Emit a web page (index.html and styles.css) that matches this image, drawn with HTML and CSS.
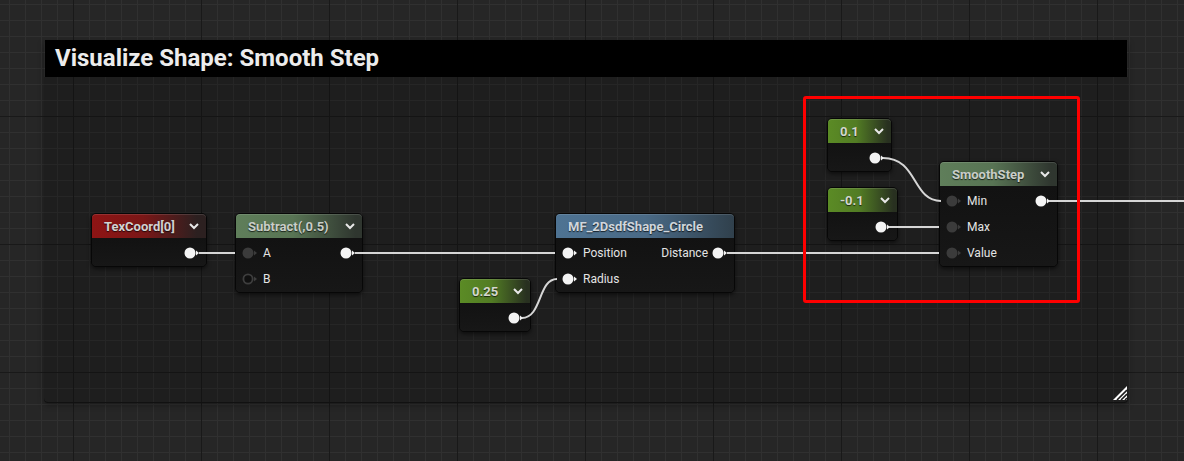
FILE: index.html
```html
<!DOCTYPE html>
<html lang="en">
<head>
    <meta charset="UTF-8">
    <title>Visualize Shape: Smooth Step</title>
    <link rel="stylesheet" href="styles.css">
</head>
<body>
    <div class="graph">
        <!-- Comment box -->
        <div class="comment">
            <div class="comment-title">Visualize Shape: Smooth Step</div>
            <div class="comment-body">
                <svg class="resize" viewBox="0 0 14 14">
                    <path d="M14 0 L14 14 L0 14 Z" fill="#fff"/>
                    <path d="M4 14 L14 4 M8 14 L14 8 M12 14 L14 12" stroke="#1c1c1c" stroke-width="1.6"/>
                </svg>
            </div>
        </div>

        <!-- Nodes -->
        <div class="node texcoord">
            <div class="node-head head-red"><span>TexCoord[0]</span><svg class="chev" viewBox="0 0 10 7"><polyline points="1,1 5,5 9,1"/></svg></div>
            <div class="node-body">
                <div class="row end">
                    <div class="out"><svg class="pin" viewBox="0 0 16 12"><circle cx="6" cy="6" r="5.5"/><path d="M12 3.5 L15 6 L12 8.5 Z"/></svg></div>
                </div>
            </div>
        </div>

        <div class="node subtract">
            <div class="node-head head-math"><span>Subtract(,0.5)</span><svg class="chev" viewBox="0 0 10 7"><polyline points="1,1 5,5 9,1"/></svg></div>
            <div class="node-body">
                <div class="row">
                    <div class="in"><svg class="pin dim" viewBox="0 0 16 12"><circle cx="6" cy="6" r="5.5"/><path d="M12 3.5 L15 6 L12 8.5 Z"/></svg><span>A</span></div>
                    <div class="out"><svg class="pin" viewBox="0 0 16 12"><circle cx="6" cy="6" r="5.5"/><path d="M12 3.5 L15 6 L12 8.5 Z"/></svg></div>
                </div>
                <div class="row">
                    <div class="in"><svg class="pin hollow" viewBox="0 0 16 12"><circle cx="6" cy="6" r="4.6"/><path d="M12 3.5 L15 6 L12 8.5 Z"/></svg><span>B</span></div>
                </div>
            </div>
        </div>

        <div class="node circle">
            <div class="node-head head-func"><span>MF_2DsdfShape_Circle</span></div>
            <div class="node-body">
                <div class="row">
                    <div class="in"><svg class="pin" viewBox="0 0 16 12"><circle cx="6" cy="6" r="5.5"/><path d="M12 3.5 L15 6 L12 8.5 Z"/></svg><span>Position</span></div>
                    <div class="out"><span>Distance</span><svg class="pin" viewBox="0 0 16 12"><circle cx="6" cy="6" r="5.5"/><path d="M12 3.5 L15 6 L12 8.5 Z"/></svg></div>
                </div>
                <div class="row">
                    <div class="in"><svg class="pin" viewBox="0 0 16 12"><circle cx="6" cy="6" r="5.5"/><path d="M12 3.5 L15 6 L12 8.5 Z"/></svg><span>Radius</span></div>
                </div>
            </div>
        </div>

        <div class="node const-radius">
            <div class="node-head head-const"><span>0.25</span><svg class="chev" viewBox="0 0 10 7"><polyline points="1,1 5,5 9,1"/></svg></div>
            <div class="node-body">
                <div class="row end">
                    <div class="out"><svg class="pin" viewBox="0 0 16 12"><circle cx="6" cy="6" r="5.5"/><path d="M12 3.5 L15 6 L12 8.5 Z"/></svg></div>
                </div>
            </div>
        </div>

        <div class="node const-min">
            <div class="node-head head-const"><span>0.1</span><svg class="chev" viewBox="0 0 10 7"><polyline points="1,1 5,5 9,1"/></svg></div>
            <div class="node-body">
                <div class="row end">
                    <div class="out"><svg class="pin" viewBox="0 0 16 12"><circle cx="6" cy="6" r="5.5"/><path d="M12 3.5 L15 6 L12 8.5 Z"/></svg></div>
                </div>
            </div>
        </div>

        <div class="node const-max">
            <div class="node-head head-const"><span>-0.1</span><svg class="chev" viewBox="0 0 10 7"><polyline points="1,1 5,5 9,1"/></svg></div>
            <div class="node-body">
                <div class="row end">
                    <div class="out"><svg class="pin" viewBox="0 0 16 12"><circle cx="6" cy="6" r="5.5"/><path d="M12 3.5 L15 6 L12 8.5 Z"/></svg></div>
                </div>
            </div>
        </div>

        <div class="node smoothstep">
            <div class="node-head head-math"><span>SmoothStep</span><svg class="chev" viewBox="0 0 10 7"><polyline points="1,1 5,5 9,1"/></svg></div>
            <div class="node-body">
                <div class="row">
                    <div class="in"><svg class="pin dim" viewBox="0 0 16 12"><circle cx="6" cy="6" r="5.5"/><path d="M12 3.5 L15 6 L12 8.5 Z"/></svg><span>Min</span></div>
                    <div class="out"><svg class="pin" viewBox="0 0 16 12"><circle cx="6" cy="6" r="5.5"/><path d="M12 3.5 L15 6 L12 8.5 Z"/></svg></div>
                </div>
                <div class="row">
                    <div class="in"><svg class="pin dim" viewBox="0 0 16 12"><circle cx="6" cy="6" r="5.5"/><path d="M12 3.5 L15 6 L12 8.5 Z"/></svg><span>Max</span></div>
                </div>
                <div class="row">
                    <div class="in"><svg class="pin dim" viewBox="0 0 16 12"><circle cx="6" cy="6" r="5.5"/><path d="M12 3.5 L15 6 L12 8.5 Z"/></svg><span>Value</span></div>
                </div>
            </div>
        </div>

        <!-- Wires -->
        <svg class="wires" viewBox="0 0 1184 461">
            <path d="M199 253 L235 253"/>
            <path d="M355 253 L555 253"/>
            <path d="M522 318 C542 318, 538 279, 557 279"/>
            <path d="M727 253 L939 253"/>
            <path d="M883 158 C918 158, 912 201, 941 201"/>
            <path d="M889 227 L939 227"/>
            <path d="M1049 201 L1184 201"/>
        </svg>

        <!-- Highlight -->
        <div class="highlight"></div>
    </div>
</body>
</html>
```

FILE: styles.css
```css
body {
    margin: 0;
    font-family: Roboto, "Liberation Sans", sans-serif;
    background-color: #262626;
}
.graph {
    position: relative;
    width: 1184px;
    height: 461px;
    overflow: hidden;
    background-color: #262626;
    background-image:
        linear-gradient(to right, #191919 1px, transparent 1px),
        linear-gradient(to bottom, #191919 1px, transparent 1px),
        linear-gradient(to right, #303030 1px, transparent 1px),
        linear-gradient(to bottom, #303030 1px, transparent 1px);
    background-size: 128px 128px, 128px 128px, 16px 16px, 16px 16px;
    background-position: 73px 0, 0 116px, 9px 0, 0 4px;
}
.comment {
    position: absolute;
    left: 44px;
    top: 40px;
    width: 1084px;
    height: 362px;
    display: flex;
    flex-direction: column;
    border-radius: 2px 2px 4px 4px;
    box-shadow: 0 1px 0 #111, 0 3px 6px rgba(0, 0, 0, 0.35);
}
.comment-title {
    height: 37px;
    line-height: 37px;
    margin: 0 1px;
    padding-left: 10px;
    background-color: #000;
    color: #ececec;
    font-size: 24px;
    font-weight: bold;
}
.comment-body {
    flex: 1;
    position: relative;
    background-color: rgba(0, 0, 0, 0.2);
    border-radius: 0 0 4px 4px;
}
.resize {
    position: absolute;
    right: 1px;
    bottom: 2px;
    width: 14px;
    height: 14px;
}
.node {
    position: absolute;
    box-sizing: border-box;
    background-color: #151515;
    border: 1px solid #070707;
    border-radius: 5px;
    box-shadow: 0 2px 4px rgba(0, 0, 0, 0.55);
}
.node-head {
    height: 24px;
    display: flex;
    align-items: center;
    justify-content: space-between;
    padding: 0 7px 0 12px;
    border-radius: 4px 4px 0 0;
    color: #d2d2d2;
    font-size: 13px;
    font-weight: bold;
    text-shadow: 0 1px 1px rgba(0, 0, 0, 0.7);
    box-shadow: inset 0 1px 0 rgba(255, 255, 255, 0.12);
}
.head-red {
    background: linear-gradient(to right, #8e1414 0%, #7a1717 45%, #2c2020 92%);
}
.head-math {
    background: linear-gradient(to right, #5f7e5a 0%, #587454 45%, #2f362f 95%);
    color: #c9cec8;
}
.head-func {
    background: linear-gradient(to right, #4e7393 0%, #4a6a86 50%, #30404c 100%);
    color: #d0d6dc;
}
.head-const {
    background: linear-gradient(to right, #5b8b25 0%, #527c24 45%, #283020 95%);
    color: #d4d8ce;
}
.chev {
    width: 10px;
    height: 7px;
    fill: none;
    stroke: #e8e8e8;
    stroke-width: 2;
}
.node-body {
    padding-top: 2px;
    background: linear-gradient(to bottom, #121212, #171717);
    border-radius: 0 0 4px 4px;
}
.row {
    height: 26px;
    display: flex;
    align-items: center;
    justify-content: space-between;
    padding: 0 6px;
    color: #e4e4e4;
    font-size: 12px;
}
.row.end {
    justify-content: flex-end;
}
.in, .out {
    display: flex;
    align-items: center;
}
.in {
    gap: 5px;
}
.out {
    gap: 4px;
}
.pin {
    width: 16px;
    height: 12px;
    fill: #f4f4f4;
}
.pin.dim {
    fill: #3b3b3b;
}
.pin.hollow circle {
    fill: #101010;
    stroke: #3e3e3e;
    stroke-width: 1.8;
}
.pin.hollow path {
    fill: #3e3e3e;
}
.texcoord { left: 91px; top: 213px; width: 116px; }
.subtract { left: 235px; top: 213px; width: 128px; }
.circle { left: 555px; top: 213px; width: 180px; }
.const-radius { left: 459px; top: 278px; width: 72px; }
.const-min { left: 827px; top: 118px; width: 65px; }
.const-max { left: 827px; top: 187px; width: 71px; }
.smoothstep { left: 939px; top: 161px; width: 119px; }
.wires {
    position: absolute;
    left: 0;
    top: 0;
    width: 1184px;
    height: 461px;
    fill: none;
    stroke: #d6d6d6;
    stroke-width: 2;
    pointer-events: none;
}
.highlight {
    position: absolute;
    left: 803px;
    top: 96px;
    width: 277px;
    height: 207px;
    box-sizing: border-box;
    border: 3px solid #ff0000;
    border-radius: 3px;
}
```
